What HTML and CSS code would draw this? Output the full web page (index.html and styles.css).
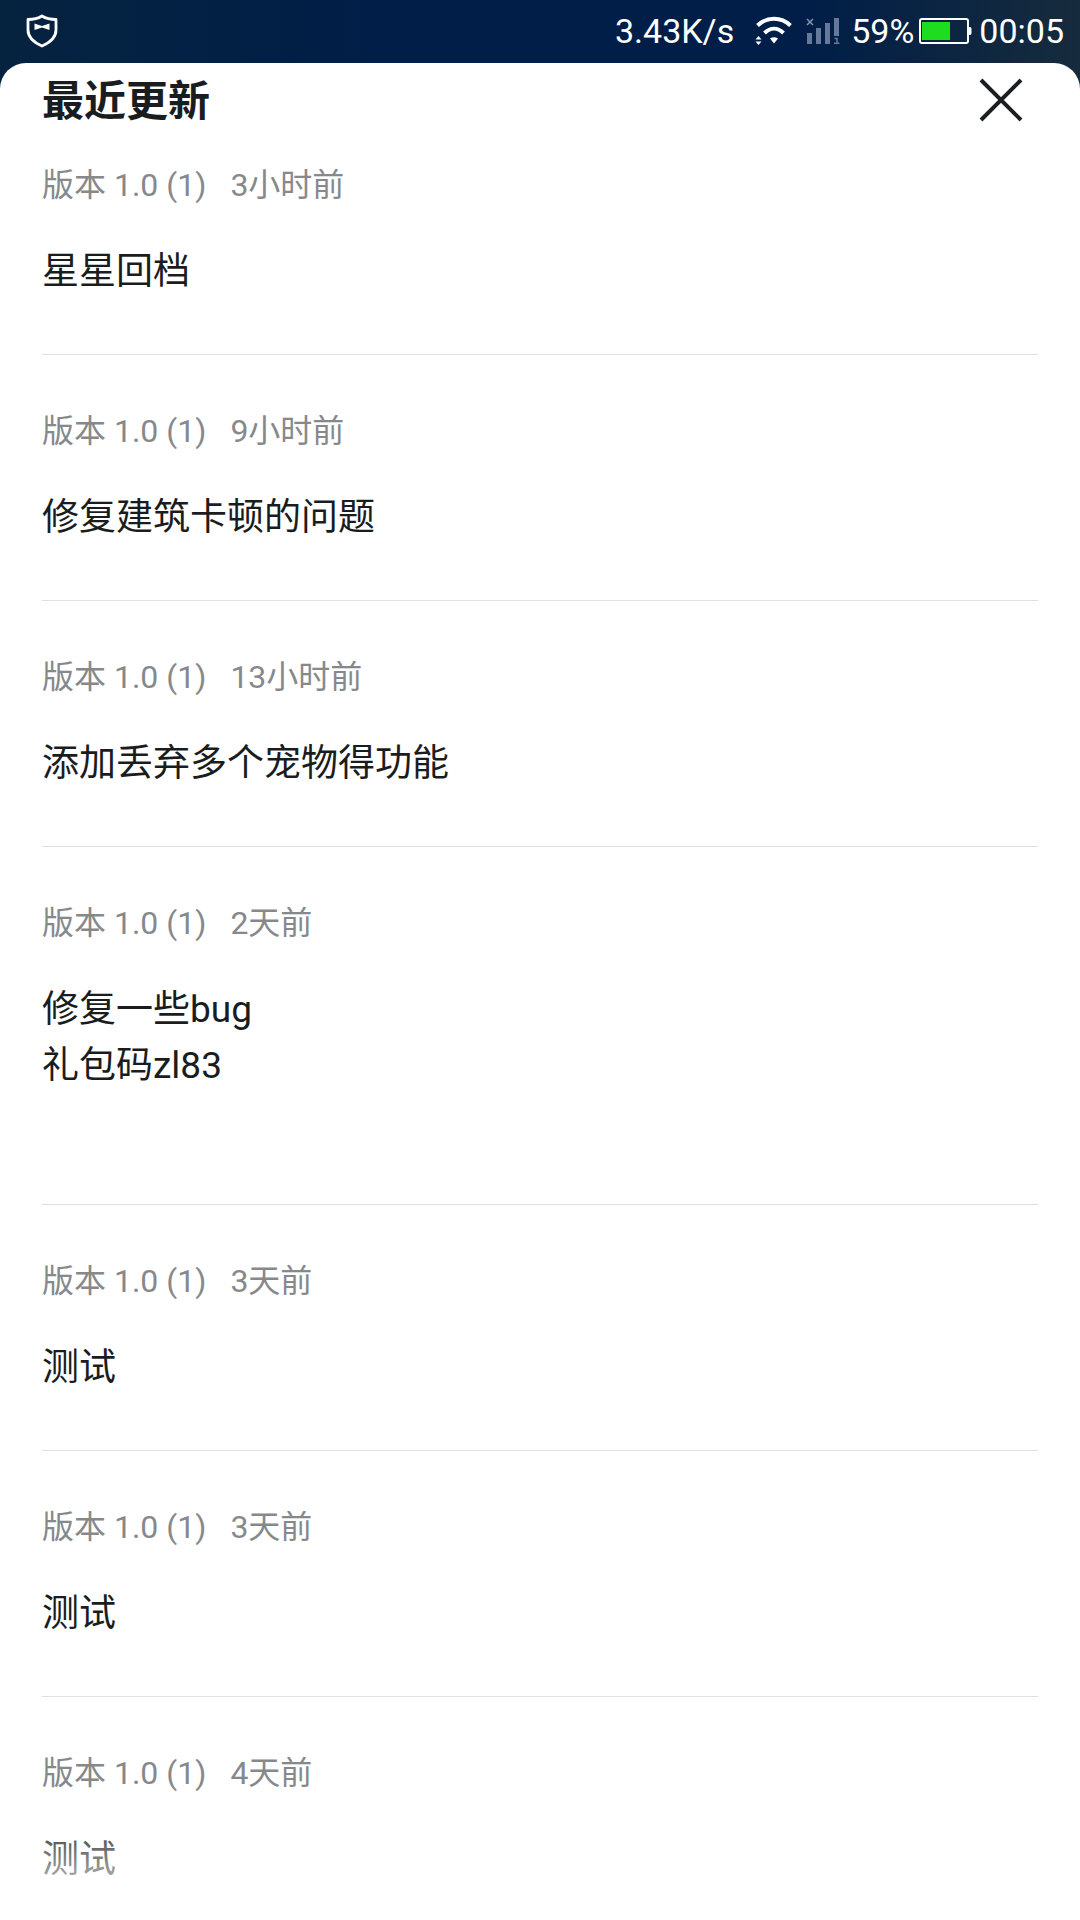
FILE: index.html
```html
<!DOCTYPE html>
<html lang="zh-CN">
<head>
    <meta charset="UTF-8">
    <meta name="viewport" content="width=device-width, initial-scale=1.0">
    <title>最近更新</title>
    <link rel="stylesheet" href="styles.css">
</head>
<body>
    <div class="status-bar">
        <svg class="shield" width="32" height="34" viewBox="0 0 32 34" fill="none">
            <path d="M16 2 C12 4.500 7 5.500 2 5.500 V16 C2 23 8 28.500 16 32 C24 28.500 30 23 30 16 V5.500 C25 5.500 20 4.500 16 2 Z" stroke="#fff" stroke-width="2.800" stroke-linejoin="round"/>
            <path d="M8.500 9.500 L16 12 L23.500 9.500 V16 L16 13.500 L8.500 16 Z" fill="#fff"/>
        </svg>
        <div class="status-right">
            <span class="speed">3.43K/s</span>
            <svg class="wifi" width="38" height="30" viewBox="0 0 38 30" fill="none">
                <path d="M2.500 9.500 C12 0.500 26 0.500 35.500 9.500" stroke="#fff" stroke-width="4"/>
                <path d="M9.500 17 C15.500 11.300 22.500 11.300 28.500 17" stroke="#fff" stroke-width="4"/>
                <path d="M15 22.500 Q19 20 23 22.500 L19 27.500 Z" fill="#fff"/>
                <path d="M0.500 23.500 L3.500 20 L6.500 23.500 Z M0.500 25.500 L3.500 29 L6.500 25.500 Z" fill="#fff"/>
            </svg>
            <svg class="signal" width="34" height="28" viewBox="0 0 34 28">
                <path d="M1 2 L7 8 M7 2 L1 8" stroke="#8492ab" stroke-width="1.500"/>
                <path d="M1 16 H6 V27 H1 Z M10 11 H15 V27 H10 Z M19 6 H24 V27 H19 Z M28 1 H33 V19 H28 Z" fill="#66799a"/>
                <path d="M28.500 21.500 H31 V26.300 M28 26.300 H33.500" stroke="#66799a" stroke-width="1.500" fill="none"/>
            </svg>
            <span>59%</span>
            <svg class="battery" width="53" height="26" viewBox="0 0 53 26">
                <rect x="1" y="1" width="48" height="24" rx="2" fill="none" stroke="#fff" stroke-width="2"/>
                <rect x="3" y="4" width="28" height="18" fill="#1edc1e"/>
                <path d="M49 9 H51 Q52.500 9 52.500 11 V15 Q52.500 17 51 17 H49 Z" fill="#fff"/>
            </svg>
            <span>00:05</span>
        </div>
    </div>

    <div class="sheet">
        <div class="sheet-header">
            <h1>最近更新</h1>
            <button class="close" type="button" aria-label="关闭">
                <svg width="44" height="44" viewBox="0 0 44 44">
                    <path d="M2 2 L42 42 M42 2 L2 42" stroke="#1c1f22" stroke-width="4"/>
                </svg>
            </button>
        </div>

        <div class="list">
            <div class="item">
                <p class="meta"><span>版本 1.0 (1)</span><span>3小时前</span></p>
                <p class="text">星星回档</p>
            </div>
            <div class="item">
                <p class="meta"><span>版本 1.0 (1)</span><span>9小时前</span></p>
                <p class="text">修复建筑卡顿的问题</p>
            </div>
            <div class="item">
                <p class="meta"><span>版本 1.0 (1)</span><span>13小时前</span></p>
                <p class="text">添加丢弃多个宠物得功能</p>
            </div>
            <div class="item">
                <p class="meta"><span>版本 1.0 (1)</span><span>2天前</span></p>
                <p class="text">修复一些bug<br>礼包码zl83<br><br></p>
            </div>
            <div class="item">
                <p class="meta"><span>版本 1.0 (1)</span><span>3天前</span></p>
                <p class="text">测试</p>
            </div>
            <div class="item">
                <p class="meta"><span>版本 1.0 (1)</span><span>3天前</span></p>
                <p class="text">测试</p>
            </div>
            <div class="item">
                <p class="meta"><span>版本 1.0 (1)</span><span>4天前</span></p>
                <p class="text">测试</p>
            </div>
        </div>
        <div class="fade"></div>
    </div>
</body>
</html>
```
FILE: styles.css
```css
* {
    box-sizing: border-box;
}

body {
    margin: 0;
    height: 100vh;
    display: flex;
    flex-direction: column;
    overflow: hidden;
    font-family: Roboto, "Noto Sans CJK SC", sans-serif;
    color: #1a1d20;
    background: linear-gradient(90deg, #05233f 0%, #001e47 35%, #001e47 75%, #162b3c 100%);
}

h1, p {
    margin: 0;
}

.status-bar {
    height: 63px;
    flex: none;
    display: flex;
    align-items: center;
    justify-content: space-between;
    padding: 0 16px 1px 26px;
    color: #fff;
    font-size: 34px;
    line-height: 40px;
}

.status-right {
    display: flex;
    align-items: center;
}

.wifi {
    margin-left: 21px;
}

.signal {
    margin: 0 11px 0 13px;
}

.battery {
    margin: 0 7px 0 5px;
}

.sheet {
    position: relative;
    flex: 1;
    min-height: 0;
    display: flex;
    flex-direction: column;
    background: #fff;
    border-radius: 26px 26px 0 0;
    overflow: hidden;
}

.sheet-header {
    flex: none;
    display: flex;
    align-items: center;
    justify-content: space-between;
    height: 74px;
    padding: 0 57px 0 42px;
}

h1 {
    padding-top: 4px;
    font-size: 42px;
    line-height: 60px;
    font-weight: bold;
}

.close {
    display: flex;
    padding: 0;
    border: none;
    background: none;
    cursor: pointer;
}

/* scrollbar hidden, the list runs under the fade */
.list {
    flex: 1;
    min-height: 0;
    padding: 0 42px;
    overflow: hidden;
}

.item {
    padding: 52px 0 54px;
    border-bottom: 1px solid #dedfe0;
}

.item:first-child {
    padding-top: 24px;
}

.meta {
    display: flex;
    gap: 24px;
    margin-bottom: 35px;
    font-size: 32px;
    line-height: 48px;
    color: #86898c;
}

.text {
    font-size: 37px;
    line-height: 56px;
}

.fade {
    position: absolute;
    left: 0;
    right: 0;
    bottom: 0;
    height: 110px;
    background: linear-gradient(rgba(255, 255, 255, 0), #fff);
    pointer-events: none;
}
```
